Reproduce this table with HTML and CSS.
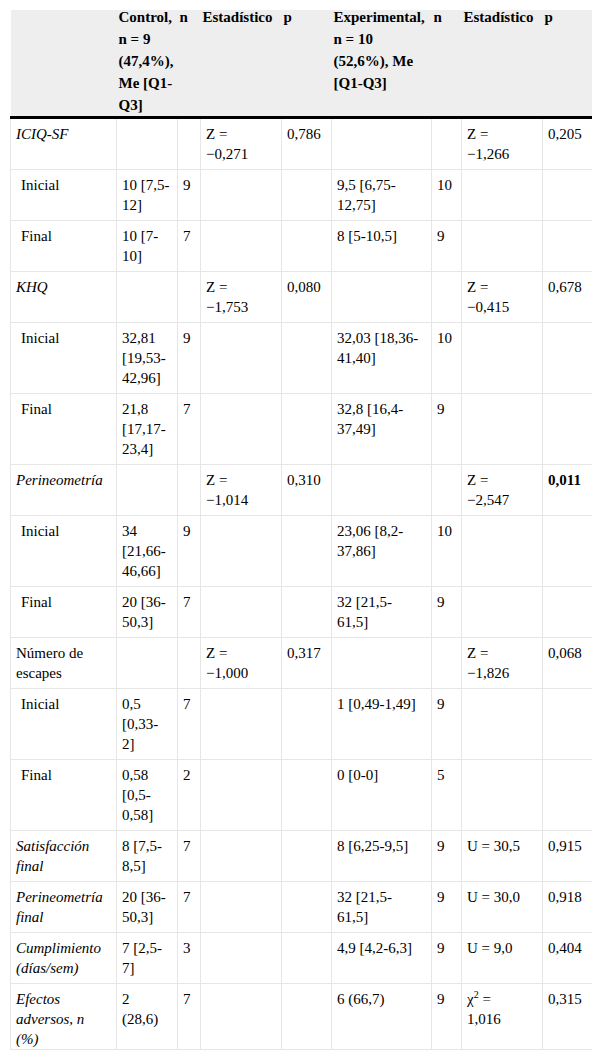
FILE: index.html
```html
<!DOCTYPE html>
<html lang="es">
<head>
<meta charset="utf-8">
<title>Tabla</title>
<link rel="stylesheet" href="styles.css">
</head>
<body>
<div class="frame">
<table class="data">
<colgroup>
<col class="c1"><col class="c2"><col class="c3"><col class="c4"><col class="c5"><col class="c6"><col class="c7"><col class="c8"><col class="c9">
</colgroup>
<thead>
<tr>
<th></th>
<th>Control,<br>n = 9<br>(47,4%),<br>Me [Q1-<br>Q3]</th>
<th>n</th>
<th>Estadístico</th>
<th>p</th>
<th>Experimental,<br>n = 10<br>(52,6%), Me<br>[Q1-Q3]</th>
<th>n</th>
<th>Estadístico</th>
<th>p</th>
</tr>
</thead>
<tbody>
<tr><td class="it">ICIQ-SF</td><td></td><td></td><td>Z =<br>−0,271</td><td>0,786</td><td></td><td></td><td>Z =<br>−1,266</td><td>0,205</td></tr>
<tr><td class="sub">Inicial</td><td>10 [7,5-<br>12]</td><td>9</td><td></td><td></td><td>9,5 [6,75-<br>12,75]</td><td>10</td><td></td><td></td></tr>
<tr><td class="sub">Final</td><td>10 [7-<br>10]</td><td>7</td><td></td><td></td><td>8 [5-10,5]</td><td>9</td><td></td><td></td></tr>
<tr><td class="it">KHQ</td><td></td><td></td><td>Z =<br>−1,753</td><td>0,080</td><td></td><td></td><td>Z =<br>−0,415</td><td>0,678</td></tr>
<tr><td class="sub">Inicial</td><td>32,81<br>[19,53-<br>42,96]</td><td>9</td><td></td><td></td><td>32,03 [18,36-<br>41,40]</td><td>10</td><td></td><td></td></tr>
<tr><td class="sub">Final</td><td>21,8<br>[17,17-<br>23,4]</td><td>7</td><td></td><td></td><td>32,8 [16,4-<br>37,49]</td><td>9</td><td></td><td></td></tr>
<tr><td class="it">Perineometría</td><td></td><td></td><td>Z =<br>−1,014</td><td>0,310</td><td></td><td></td><td>Z =<br>−2,547</td><td><b>0,011</b></td></tr>
<tr><td class="sub">Inicial</td><td>34<br>[21,66-<br>46,66]</td><td>9</td><td></td><td></td><td>23,06 [8,2-<br>37,86]</td><td>10</td><td></td><td></td></tr>
<tr><td class="sub">Final</td><td>20 [36-<br>50,3]</td><td>7</td><td></td><td></td><td>32 [21,5-<br>61,5]</td><td>9</td><td></td><td></td></tr>
<tr><td>Número de<br>escapes</td><td></td><td></td><td>Z =<br>−1,000</td><td>0,317</td><td></td><td></td><td>Z =<br>−1,826</td><td>0,068</td></tr>
<tr><td class="sub">Inicial</td><td>0,5<br>[0,33-<br>2]</td><td>7</td><td></td><td></td><td>1 [0,49-1,49]</td><td>9</td><td></td><td></td></tr>
<tr><td class="sub">Final</td><td>0,58<br>[0,5-<br>0,58]</td><td>2</td><td></td><td></td><td>0 [0-0]</td><td>5</td><td></td><td></td></tr>
<tr><td class="it">Satisfacción<br>final</td><td>8 [7,5-<br>8,5]</td><td>7</td><td></td><td></td><td>8 [6,25-9,5]</td><td>9</td><td>U = 30,5</td><td>0,915</td></tr>
<tr><td class="it">Perineometría<br>final</td><td>20 [36-<br>50,3]</td><td>7</td><td></td><td></td><td>32 [21,5-<br>61,5]</td><td>9</td><td>U = 30,0</td><td>0,918</td></tr>
<tr><td class="it">Cumplimiento<br>(días/sem)</td><td>7 [2,5-<br>7]</td><td>3</td><td></td><td></td><td>4,9 [4,2-6,3]</td><td>9</td><td>U = 9,0</td><td>0,404</td></tr>
<tr><td class="it">Efectos<br>adversos, n<br>(%)</td><td>2<br>(28,6)</td><td>7</td><td></td><td></td><td>6 (66,7)</td><td>9</td><td>χ<sup>2</sup> =<br>1,016</td><td>0,315</td></tr>
</tbody>
</table>
</div>
</body>
</html>
```
FILE: styles.css
```css
html, body {
  margin: 0;
  padding: 0;
  background: #ffffff;
}

body {
  font-family: "Liberation Serif", "DejaVu Serif", serif;
  font-size: 15px;
  color: #000;
}

.frame {
  margin: 10px 0 0 10px;
  width: 582px;
  height: 1040px;
  overflow: hidden;
  box-sizing: border-box;
  border-bottom: 1px solid #e6e6e6;
}

.data {
  width: 582px;
  margin-top: -4px;
  border-collapse: collapse;
  table-layout: fixed;
}

.c1 { width: 106px; }
.c2 { width: 61px; }
.c3 { width: 23px; }
.c4 { width: 81px; }
.c5 { width: 50px; }
.c6 { width: 100px; }
.c7 { width: 30px; }
.c8 { width: 81px; }
.c9 { width: 50px; }

.data th {
  background: #eeeeee;
  font-weight: bold;
  text-align: left;
  vertical-align: top;
  line-height: 22px;
  padding: 0 2px;
  white-space: nowrap;
  border-bottom: 3px solid #000;
}

.data td {
  border: 1px solid #e6e6e6;
  vertical-align: top;
  line-height: 20px;
  padding: 5px 5px;
  white-space: nowrap;
}

.data td.it {
  font-style: italic;
}

.data td.sub {
  padding-left: 10px;
}

.data sup {
  font-size: 10px;
  line-height: 0;
  vertical-align: 6px;
}
```
